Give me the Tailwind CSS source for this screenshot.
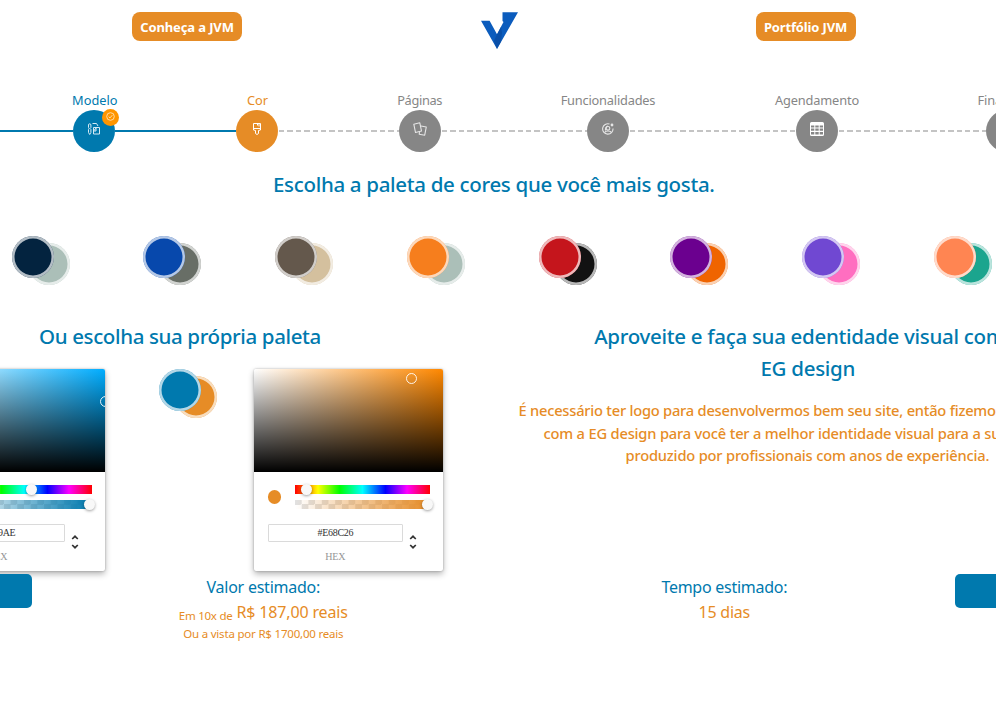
<!DOCTYPE html>
<html lang="pt-BR">
<head>
<meta charset="utf-8">
<title>JVM</title>
<script src="https://cdn.jsdelivr.net/npm/@tailwindcss/browser@4"></script>
</head>
<body class="bg-white">
<div class="w-[996px] h-[708px] overflow-hidden font-['Noto_Sans','Open_Sans',sans-serif]">

  <!-- Header -->
  <header class="flex h-[91px] items-start pt-3 pl-[132px]">
    <a class="flex h-[29px] w-[110px] items-center justify-center rounded-lg bg-[#e68c26] pt-[2px] text-[13px] font-bold tracking-[-0.12px] whitespace-nowrap text-white">Conheça a JVM</a>
    <svg class="ml-[239px] h-[37px] w-[37px]" viewBox="0 0 37 37">
      <path d="M0 8.700h8.600l7.400 13.500 6.500-12.200L21.500 9V.3H37L16 37z" fill="#0b5cbd"/>
      <path d="M16 22.200l4-7.500 1 6-1 9-4 7.300-3-8z" fill="#08469a" opacity=".6"/>
    </svg>
    <a class="ml-[237.500px] flex h-[29px] w-[100px] items-center justify-center rounded-lg bg-[#e68c26] pt-[2px] text-[13px] font-bold tracking-[-0.15px] whitespace-nowrap text-white">Portfólio JVM</a>
  </header>

  <!-- Steps -->
  <nav class="flex w-[1040px] items-end h-[60.500px] text-[12.800px] text-[#868686]">
    <div class="mb-5 h-[2px] w-[73.300px] bg-[#0079ae]"></div>
    <div class="flex w-[42px] flex-col items-center text-[#0079ae]">
      <span class="h-[18.500px] pl-px leading-[18px] whitespace-nowrap">Modelo</span>
      <div class="relative flex h-[42px] w-[42px] items-center justify-center rounded-full bg-[#0079ae]">
        <svg class="mb-[3px] h-[14px] w-[14px]" viewBox="0 0 14 14" fill="none" stroke="#d5eaf4" stroke-width="1">
          <path d="M1.500 3a1.200 1.200 0 0 1 2.400 0v2.500l-.9 1 .9 1v3l-1.200 2-1.200-2v-3l.6-1-.6-1zM5.500 1.500h4L11 4M6.500 5.500h6v6.500h-6zM6.500 9l3-3.500M9 5.500V9H6.500"/>
        </svg>
        <span class="absolute -top-px left-[28.500px] flex h-[17px] w-[17px] items-center justify-center rounded-full bg-[#ff9500]">
          <svg class="mb-px h-[9px] w-[9px]" viewBox="0 0 9 9" fill="none" stroke="#ffe3b8" stroke-width=".9"><circle cx="4.500" cy="4.500" r="3.800"/><path d="M2.700 4.700l1.300 1.200 2.300-2.700"/></svg>
        </span>
      </div>
    </div>
    <div class="mb-5 h-[2px] w-[120.700px] bg-[#0079ae]"></div>
    <div class="flex w-[42px] flex-col items-center text-[#e68c26]">
      <span class="h-[18.500px] pl-px leading-[18px] whitespace-nowrap">Cor</span>
      <div class="flex h-[42px] w-[42px] items-center justify-center rounded-full bg-[#e68c26]">
        <svg class="mb-[3px] h-[14px] w-[14px]" viewBox="0 0 14 14" fill="none" stroke="#fff" stroke-width="1">
          <path d="M3.500 1.500h7V8l-2 .5v3l-1.500 1-1.500-1v-3l-2-.5zM3.500 6.500h7M7.500 1.500v2M9 1.500v3"/>
        </svg>
      </div>
    </div>
    <div class="mb-5 h-[2px] w-[120.700px] bg-[repeating-linear-gradient(90deg,#fff_0_1px,#c4c4c4_1px_6.400px,#fff_6.400px_8.400px)]"></div>
    <div class="flex w-[42px] flex-col items-center">
      <span class="h-[18.500px] leading-[18px] tracking-[-0.33px] whitespace-nowrap">Páginas</span>
      <div class="flex h-[42px] w-[42px] items-center justify-center rounded-full bg-[#868686]">
        <svg class="mb-[3px] h-[14px] w-[14px]" viewBox="0 0 14 14" fill="none" stroke="#e6e6e6" stroke-width="1.100" stroke-linejoin="round">
          <path d="M.8 2.200l6-1.400 1.700 8.200-6 1.500z"/><path d="M8 4l5.300 1-1.600 8.200-5.500-1 .4-2"/>
        </svg>
      </div>
    </div>
    <div class="mb-5 h-[2px] w-[146.300px] bg-[repeating-linear-gradient(90deg,#fff_0_1px,#c4c4c4_1px_6.400px,#fff_6.400px_8.400px)]"></div>
    <div class="flex w-[42px] flex-col items-center">
      <span class="h-[18.500px] leading-[18px] tracking-[-0.200px] whitespace-nowrap">Funcionalidades</span>
      <div class="flex h-[42px] w-[42px] items-center justify-center rounded-full bg-[#868686]">
        <svg class="mb-[3px] h-[12px] w-[12px]" viewBox="0 0 12 12" fill="none" stroke="#e6e6e6" stroke-width="1.100">
          <path d="M7.500 1A5.200 5.200 0 1 0 11 5.500"/><circle cx="6" cy="5.300" r="1.800"/><path d="M3 9.500C3.300 7.500 8.700 7.500 9 9.500M3.700 7.500A3.200 3.200 0 0 1 6 3"/><circle cx="10" cy="2" r="1.400" fill="#e6e6e6" stroke="none"/>
        </svg>
      </div>
    </div>
    <div class="mb-5 h-[2px] w-[167px] bg-[repeating-linear-gradient(90deg,#fff_0_1px,#c4c4c4_1px_6.400px,#fff_6.400px_8.400px)]"></div>
    <div class="flex w-[42px] flex-col items-center">
      <span class="h-[18.500px] leading-[18px] tracking-[-0.15px] whitespace-nowrap">Agendamento</span>
      <div class="flex h-[42px] w-[42px] items-center justify-center rounded-full bg-[#868686]">
        <svg class="mb-[3px] h-[14px] w-[14px]" viewBox="0 0 14 14">
          <path fill="#fff" fill-rule="evenodd" d="M1.500 0h11A1.500 1.500 0 0 1 14 1.500v11a1.500 1.500 0 0 1-1.500 1.500h-11A1.500 1.500 0 0 1 0 12.500v-11A1.500 1.500 0 0 1 1.500 0zM1 3.500v2h3.300v-2zM5.300 3.500v2h3.400v-2zM9.700 3.500v2H13v-2zM1 6.500v2.300h3.300V6.500zM5.300 6.500v2.300h3.400V6.500zM9.700 6.500v2.300H13V6.500zM1 10v2.500h3.300V10zM5.300 10v2.500h3.400V10zM9.700 10v2.500H13V10z"/>
        </svg>
      </div>
    </div>
    <div class="mb-5 h-[2px] w-[148px] bg-[repeating-linear-gradient(90deg,#fff_0_1px,#c4c4c4_1px_6.400px,#fff_6.400px_8.400px)]"></div>
    <div class="flex w-[42px] flex-col items-center">
      <span class="h-[18.500px] leading-[18px] tracking-[-0.15px] whitespace-nowrap">Finalizado</span>
      <div class="h-[42px] w-[42px] rounded-full bg-[#868686]"></div>
    </div>
  </nav>

  <h1 class="mt-[16.500px] h-[68px] pl-[273px] text-[20.500px] font-medium leading-8 tracking-[-0.32px] whitespace-nowrap text-[#0079ae]">Escolha a paleta de cores que você mais gosta.</h1>

  <!-- Ready-made palettes -->
  <section id="palettes" class="flex h-[84px] w-[1100px] gap-[73.700px] pl-[11.800px]"></section>

  <main class="flex h-[254px]">
    <!-- Custom palette -->
    <section class="w-[500px] shrink-0">
      <h2 class="h-[48.500px] pl-[39px] text-[20.500px] font-medium leading-8 tracking-[-0.37px] whitespace-nowrap text-[#0079ae]">Ou escolha sua própria paleta</h2>
      <div id="custom" class="-ml-[83.700px] flex items-start"></div>
    </section>

    <!-- Visual identity partner -->
    <section class="w-[615.500px] shrink-0 text-center whitespace-nowrap">
      <h2 class="h-[79px] text-[20.500px] font-medium leading-8 tracking-[-0.3px] text-[#0079ae]">Aproveite e faça sua edentidade visual com a<br>EG design</h2>
      <div class="pl-[18.500px] text-left text-[14.700px] font-medium leading-[22.700px] tracking-[-0.2px] text-[#e68c26]">
        <p class="tracking-[-0.240px]">É necessário ter logo para desenvolvermos bem seu site, então fizemos parceria</p>
        <p class="pl-[25px]">com a EG design para você ter a melhor identidade visual para a sua empresa,</p>
        <p class="pl-[107px]">produzido por profissionais com anos de experiência.</p>
      </div>
    </section>
  </main>

  <!-- Estimates -->
  <footer class="flex w-[1120px] items-start whitespace-nowrap">
    <div class="h-[33.500px] w-[32.300px] rounded-r-[5px] bg-[#0079ae]"></div>
    <div class="ml-[130px] w-[202px] text-center text-[#e68c26]">
      <p class="h-[26px] text-[16px] leading-[26px] tracking-[-0.24px] text-[#0079ae]">Valor estimado:</p>
      <p class="h-[25px] text-[16px] leading-[25px] tracking-[-0.15px]"><span class="relative top-[1.500px] text-[11.500px] tracking-[-0.25px]">Em 10x de</span> R$ 187,00 reais</p>
      <p class="h-[18px] text-[11.500px] leading-[18px] tracking-[-0.2px]">Ou a vista por R$ 1700,00 reais</p>
    </div>
    <div class="ml-[259px] w-[202px] text-center text-[#e68c26]">
      <p class="h-[26px] text-[16px] leading-[26px] tracking-[-0.27px] text-[#0079ae]">Tempo estimado:</p>
      <p class="h-[25px] text-[16px] leading-[25px] tracking-[-0.24px]">15 dias</p>
    </div>
    <div class="ml-[129.700px] h-[33.500px] w-[120px] rounded-[5px] bg-[#0079ae]"></div>
  </footer>
</div>

<script>
const pair = (a, b) => `<div class="flex w-[58px] shrink-0 items-start">
  <i class="z-1 size-[42px] shrink-0 rounded-full shadow-[inset_0_0_0_2.5px_rgba(255,255,255,0.7)]" style="background-color:${a}"></i>
  <i class="mt-[7px] -ml-[26px] size-[42px] shrink-0 rounded-full shadow-[inset_0_0_0_2.5px_rgba(255,255,255,0.7)]" style="background-color:${b}"></i></div>`;

const picker = (hex, hue, x, y, thumb) => `
<div class="h-[202.500px] w-[189px] shrink-0 overflow-clip rounded-[2px] bg-white shadow-[0_0_2px_rgba(0,0,0,0.3),0_3px_6px_rgba(0,0,0,0.3)]">
  <div class="relative h-[103px] overflow-hidden" style="background:linear-gradient(to top,#000,transparent),linear-gradient(to right,#fff,${hue})">
    <i class="absolute size-[11px] rounded-full border-[1.500px] border-white/90" style="left:${x}px;top:${y}px"></i>
  </div>
  <div class="px-[13.500px] pt-[13.500px]">
    <div class="flex items-center gap-[13.500px]">
      <i class="size-[13.500px] rounded-full" style="background-color:${hex}"></i>
      <div class="flex w-[135px] flex-col gap-[6.300px]">
        <div class="relative h-[8.700px] bg-[linear-gradient(90deg,#f00,#ff0_17%,#0f0_33%,#0ff_50%,#00f_67%,#f0f_83%,#f00)]"><i class="absolute -top-[0.700px] size-[10.700px] rounded-full bg-[#f8f8f8] shadow-[0_1px_3px_rgba(0,0,0,0.37)]" style="left:${thumb}px"></i></div>
        <div class="relative h-[8.700px]" style="background:linear-gradient(90deg,transparent,${hex}),conic-gradient(#fff 25%,#e1e1e1 0 50%,#fff 0 75%,#e1e1e1 0) 0 0/13.4px 8.7px"><i class="absolute -top-[0.700px] left-[127.500px] size-[10.700px] rounded-full bg-[#f8f8f8] shadow-[0_1px_3px_rgba(0,0,0,0.37)]"></i></div>
      </div>
    </div>
    <div class="mt-[15.500px] flex">
      <div class="w-[135px] text-center font-['Liberation_Serif',serif]">
        <div class="h-[18px] rounded-[1px] border border-[#dadada] text-[10px] leading-[16px] tracking-[-0.3px] text-[#333]">${hex}</div>
        <div class="mt-[7.500px] text-[10px] leading-[14px] tracking-[-0.2px] text-[#969696]">HEX</div>
      </div>
      <svg class="mt-[9.500px] ml-[6px] h-[16px] w-[8px]" viewBox="0 0 8 16" fill="none" stroke="#333" stroke-width="1.700"><path d="M1.200 5L4 2.300 6.800 5M1.200 11L4 13.700 6.800 11"/></svg>
    </div>
  </div>
</div>`;

document.getElementById('palettes').innerHTML = [
  ['#03233f', '#abbfb8'], ['#0748ac', '#686e66'], ['#64584c', '#d4c09e'], ['#f67e1d', '#abbfb8'],
  ['#c5151c', '#121212'], ['#6b008f', '#ef6400'], ['#7048d2', '#ff6ec0'], ['#ff8552', '#1ba58e'],
].map(([a, b]) => pair(a, b)).join('');

document.getElementById('custom').innerHTML =
  picker('#0079AE', '#00adff', 183.5, 27.5, 69.5) +
  '<div class="ml-[54px] w-[95px] shrink-0">' + pair('#0079ae', '#e68c26') + '</div>' +
  picker('#E68C26', '#ff8800', 152, 4.5, 6.5);
</script>
</body>
</html>
